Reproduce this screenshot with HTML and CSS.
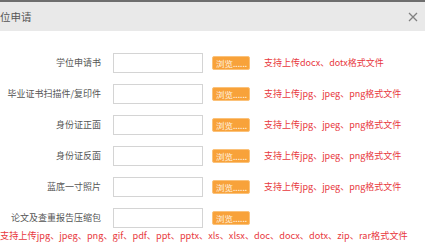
FILE: index.html
```html
<!DOCTYPE html>
<html lang="zh-CN">
<head>
    <meta charset="UTF-8">
    <title>学位申请</title>
    <link rel="stylesheet" href="styles.css">
</head>
<body>
    <div class="dialog">
        <div class="dialog-head">
            <span class="dialog-title">位申请</span>
            <svg class="close-btn" width="10" height="10" viewBox="0 0 10 10">
                <path d="M1 1L9 9M9 1L1 9" stroke="#808080" stroke-width="1.3" fill="none"/>
            </svg>
        </div>
        <div class="dialog-body">
            <div class="form-row">
                <label class="field-label">学位申请书</label>
                <span class="file-box"></span>
                <button class="browse-btn">浏览......</button>
                <span class="hint">支持上传docx、dotx格式文件</span>
            </div>
            <div class="form-row">
                <label class="field-label">毕业证书扫描件/复印件</label>
                <span class="file-box"></span>
                <button class="browse-btn">浏览......</button>
                <span class="hint">支持上传jpg、jpeg、png格式文件</span>
            </div>
            <div class="form-row">
                <label class="field-label">身份证正面</label>
                <span class="file-box"></span>
                <button class="browse-btn">浏览......</button>
                <span class="hint">支持上传jpg、jpeg、png格式文件</span>
            </div>
            <div class="form-row">
                <label class="field-label">身份证反面</label>
                <span class="file-box"></span>
                <button class="browse-btn">浏览......</button>
                <span class="hint">支持上传jpg、jpeg、png格式文件</span>
            </div>
            <div class="form-row">
                <label class="field-label">蓝底一寸照片</label>
                <span class="file-box"></span>
                <button class="browse-btn">浏览......</button>
                <span class="hint">支持上传jpg、jpeg、png格式文件</span>
            </div>
            <div class="form-row">
                <label class="field-label">论文及查重报告压缩包</label>
                <span class="file-box"></span>
                <button class="browse-btn">浏览......</button>
            </div>
            <div class="bottom-hint">支持上传jpg、jpeg、png、gif、pdf、ppt、pptx、xls、xlsx、doc、docx、dotx、zip、rar格式文件</div>
        </div>
    </div>
</body>
</html>
```

FILE: styles.css
```css
body {
    margin: 0;
    font-family: "Noto Sans CJK SC", "Liberation Sans", sans-serif;
    background-color: #fff;
}
.dialog {
    width: 425px;
    height: 247px;
    overflow: hidden;
}
.dialog-head {
    display: flex;
    align-items: center;
    justify-content: space-between;
    height: 29px;
    border-top: 2px solid #6e6e6e;
    background-color: #e9e9e9;
    padding: 0 7px 0 0;
}
.dialog-title {
    font-size: 10.5px;
    color: #555;
}
.close-btn {
    display: block;
}
.dialog-body {
    padding-top: 16px;
}
.form-row {
    display: flex;
    align-items: center;
    height: 31px;
}
.field-label {
    width: 101px;
    text-align: right;
    font-size: 9px;
    color: #555;
}
.file-box {
    width: 88px;
    height: 18px;
    margin-left: 12px;
    border: 1px solid #d4d4d4;
}
.browse-btn {
    width: 38px;
    height: 14px;
    margin-left: 9px;
    padding: 0 0 0 3px;
    border: 1px solid #fbc27a;
    border-radius: 2px;
    background-color: #f8a23a;
    color: #fff3e0;
    font-family: inherit;
    font-size: 8.5px;
    line-height: 12px;
    text-align: left;
}
.hint {
    margin-left: 14px;
    font-size: 9px;
    color: #e8383d;
}
.bottom-hint {
    margin-top: -5px;
    font-size: 9.2px;
    color: #e8383d;
    white-space: nowrap;
}
```
